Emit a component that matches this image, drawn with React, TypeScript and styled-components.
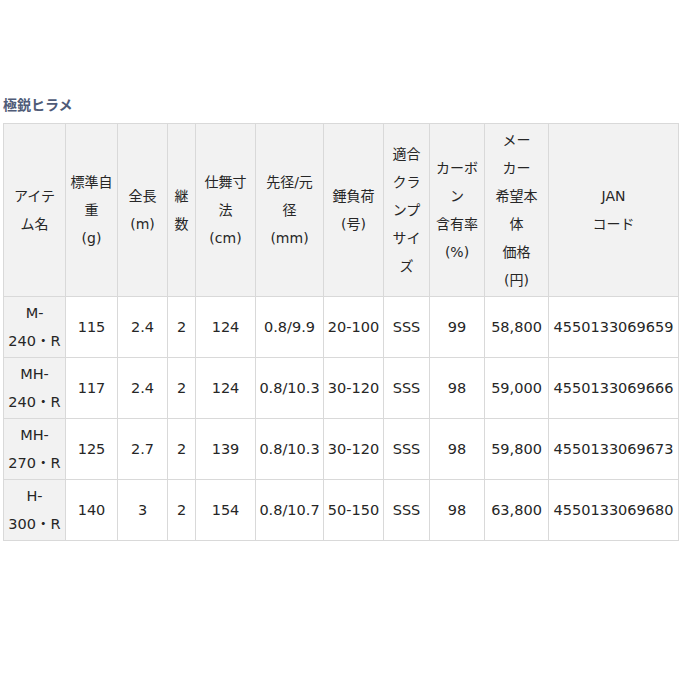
import React from "react";
import styled, { createGlobalStyle } from "styled-components";

const GlobalStyle = createGlobalStyle`
  html, body {
    margin: 0;
    padding: 0;
    background: #ffffff;
  }
  body {
    font-family: "DejaVu Sans", "Noto Sans CJK JP", sans-serif;
    font-size: 14px;
    color: #262626;
  }
`;

const Page = styled.div`
  padding: 90px 2px 0 3px;
  width: 675px;
`;

const Title = styled.h3`
  margin: 0 0 5px;
  font-size: 14px;
  line-height: 28px;
  font-weight: bold;
  color: #4f5b77;
  font-family: "Noto Sans CJK JP", sans-serif;
`;

const SpecTable = styled.table`
  width: 675px;
  border-collapse: collapse;
  table-layout: fixed;
  border: 1px solid #d9d9d9;
`;

const HeadCell = styled.th`
  background: #f2f2f2;
  border: 1px solid #d9d9d9;
  padding: 2px 2px;
  font-weight: normal;
  line-height: 28px;
  text-align: center;
  vertical-align: middle;
`;

const NameCell = styled.th`
  background: #f2f2f2;
  border: 1px solid #d9d9d9;
  padding: 2px 2px;
  font-weight: normal;
  font-size: 14.5px;
  line-height: 28px;
  text-align: center;
  vertical-align: middle;
`;

const DataCell = styled.td`
  border: 1px solid #d9d9d9;
  padding: 2px 1px;
  font-size: 14.5px;
  line-height: 28px;
  text-align: center;
  vertical-align: middle;
  white-space: nowrap;
`;

const colWidths = [62, 52, 50, 28, 60, 68, 60, 46, 55, 64, 130];

const headers: string[][] = [
  ["アイテ", "ム名"],
  ["標準自", "重", "(g)"],
  ["全長", "(m)"],
  ["継", "数"],
  ["仕舞寸", "法", "(cm)"],
  ["先径/元", "径", "(mm)"],
  ["錘負荷", "(号)"],
  ["適合", "クラ", "ンプ", "サイ", "ズ"],
  ["カーボ", "ン", "含有率", "(%)"],
  ["メー", "カー", "希望本", "体", "価格", "(円)"],
  ["JAN", "コード"],
];

type Row = {
  name: [string, string];
  values: string[];
};

const rows: Row[] = [
  {
    name: ["M-", "240・R"],
    values: ["115", "2.4", "2", "124", "0.8/9.9", "20-100", "SSS", "99", "58,800", "4550133069659"],
  },
  {
    name: ["MH-", "240・R"],
    values: ["117", "2.4", "2", "124", "0.8/10.3", "30-120", "SSS", "98", "59,000", "4550133069666"],
  },
  {
    name: ["MH-", "270・R"],
    values: ["125", "2.7", "2", "139", "0.8/10.3", "30-120", "SSS", "98", "59,800", "4550133069673"],
  },
  {
    name: ["H-", "300・R"],
    values: ["140", "3", "2", "154", "0.8/10.7", "50-150", "SSS", "98", "63,800", "4550133069680"],
  },
];

const lines = (parts: string[]) =>
  parts.map((p, i) => (
    <React.Fragment key={i}>
      {i > 0 && <br />}
      {p}
    </React.Fragment>
  ));

export default function App(): React.ReactElement {
  return (
    <Page>
      <GlobalStyle />
      <Title>極鋭ヒラメ</Title>
      <SpecTable>
        <colgroup>
          {colWidths.map((w, i) => (
            <col key={i} style={{ width: w }} />
          ))}
        </colgroup>
        <tbody>
          <tr>
            {headers.map((h, i) => (
              <HeadCell key={i}>{lines(h)}</HeadCell>
            ))}
          </tr>
          {rows.map((r) => (
            <tr key={r.values[9]}>
              <NameCell>{lines(r.name)}</NameCell>
              {r.values.map((v, i) => (
                <DataCell key={i}>{v}</DataCell>
              ))}
            </tr>
          ))}
        </tbody>
      </SpecTable>
    </Page>
  );
}
